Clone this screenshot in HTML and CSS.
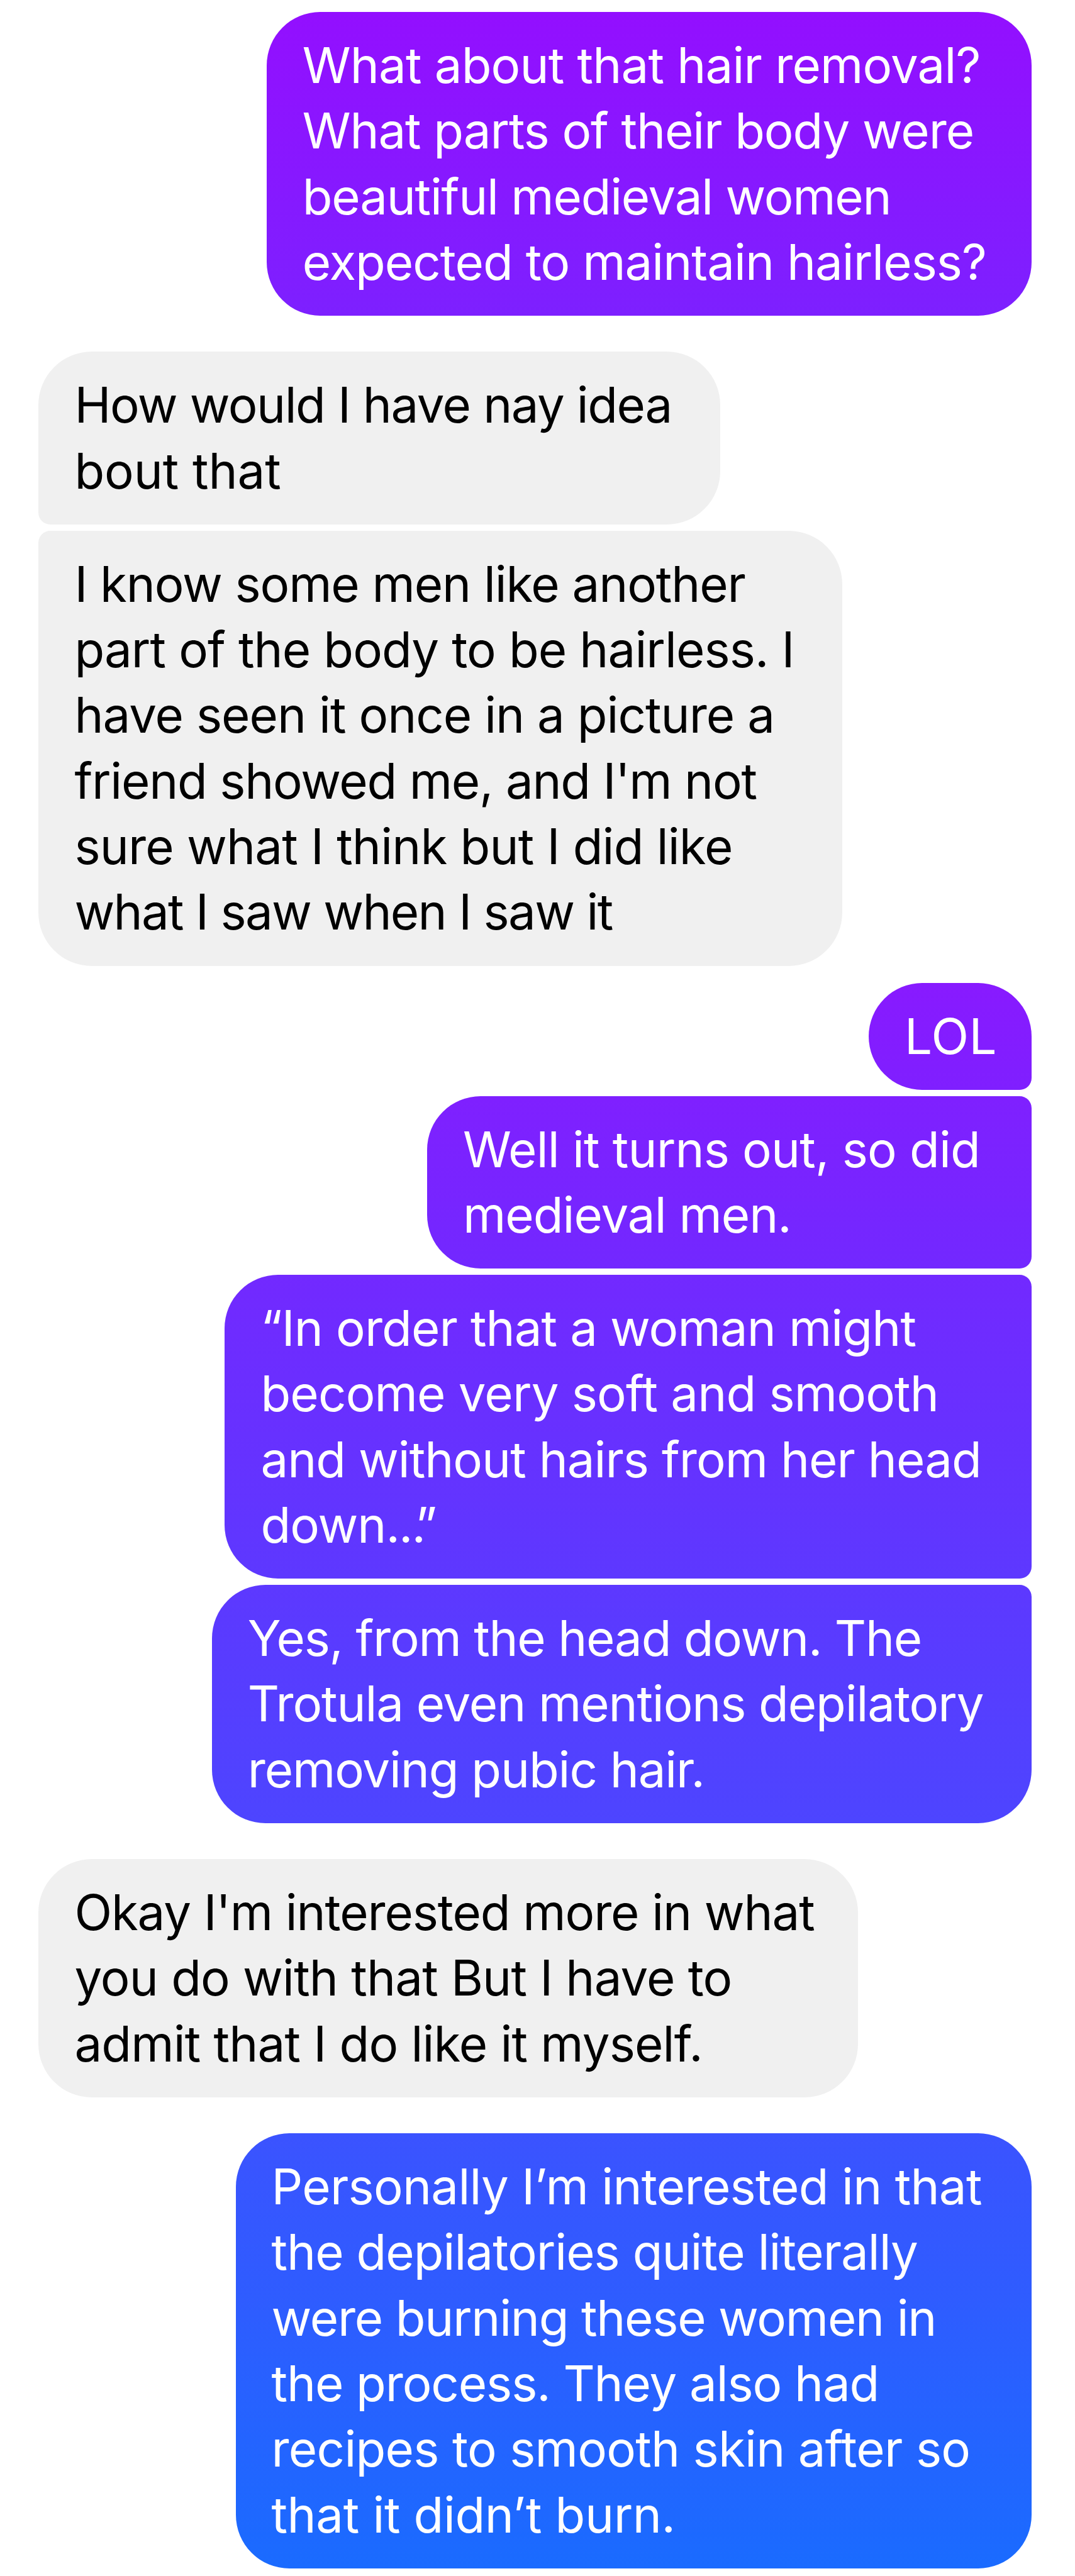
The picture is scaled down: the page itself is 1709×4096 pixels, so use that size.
FILE: index.html
```
<!DOCTYPE html>
<html lang="en">
<head>
    <meta charset="UTF-8">
    <title>Chat</title>
    <meta name="viewport" content="width=device-width, initial-scale=1.0">
    <link rel="stylesheet" href="styles.css">
</head>
<body>
    <div class="chat">
        <div class="group sent">
            <div class="bubble b1">
                <span class="s8">What about that hair removal?</span>
                <span class="s11">What parts of their body were</span>
                <span class="s12">beautiful medieval women</span>
                <span class="s10">expected to maintain hairless?</span>
            </div>
        </div>
        <div class="group received">
            <div class="bubble b2 first">
                <span class="s14">How would I have nay idea</span>
                <span class="s0">bout that</span>
            </div>
            <div class="bubble b3 last">
                <span class="s11">I know some men like another</span>
                <span class="s9">part of the body to be hairless. I</span>
                <span class="s10">have seen it once in a picture a</span>
                <span class="s12">friend showed me, and I'm not</span>
                <span class="s8">sure what I think but I did like</span>
                <span class="s17">what I saw when I saw it</span>
            </div>
        </div>
        <div class="group sent close">
            <div class="bubble b4 first">
                <span class="lol">LOL</span>
            </div>
            <div class="bubble b5 middle">
                <span class="s8">Well it turns out, so did</span>
                <span class="s10">medieval men.</span>
            </div>
            <div class="bubble b6 middle">
                <span class="s9">“In order that a woman might</span>
                <span class="s8">become very soft and smooth</span>
                <span class="s10">and without hairs from her head</span>
                <span class="s10">down<i class="dots">..</i><i class="dots end">.</i>”</span>
            </div>
            <div class="bubble b7 last">
                <span class="s12">Yes, from the head down. The</span>
                <span class="s11">Trotula even mentions depilatory</span>
                <span class="s11">removing pubic hair.</span>
            </div>
        </div>
        <div class="group received">
            <div class="bubble b8">
                <span class="s11">Okay I'm interested more in what</span>
                <span class="s8">you do with that But I have to</span>
                <span class="s8">admit that I do like it myself.</span>
            </div>
        </div>
        <div class="group sent">
            <div class="bubble b9">
                <span class="s7">Personally I’m interested in that</span>
                <span class="s10">the depilatories quite literally</span>
                <span class="s12">were burning these women in</span>
                <span class="s11">the process. They also had</span>
                <span class="s7">recipes to smooth skin after so</span>
                <span class="s4">that it didn’t burn.</span>
            </div>
        </div>
    </div>
</body>
</html>
```
FILE: styles.css
```
* {
    box-sizing: border-box;
}
body {
    margin: 0;
    background-color: white;
    font-family: Inter, "Liberation Sans", sans-serif;
}
.chat {
    display: flex;
    flex-direction: column;
    gap: 57px;
    padding: 19px 69px 0px 61.4px;
    height: 4096px;
    overflow: hidden;
}
.group {
    display: flex;
    flex-direction: column;
    gap: 9.7px;
}
.sent {
    align-items: flex-end;
}
.received {
    align-items: flex-start;
}
.close {
    margin-top: -29.9px;
}
.bubble {
    padding: 33px 0px 33px 57px;
    border-radius: 85px;
    font-size: 78px;
    line-height: 104.33px;
}
.bubble span {
    display: block;
    white-space: nowrap;
}
.sent .bubble {
    color: white;
}
.received .bubble {
    color: black;
    background-color: #f0f0f0;
}

/* corners that touch the next bubble of the same sender */
.sent .first, .sent .middle {
    border-bottom-right-radius: 19px;
}
.sent .last, .sent .middle {
    border-top-right-radius: 19px;
}
.received .first {
    border-bottom-left-radius: 19px;
}
.received .last {
    border-top-left-radius: 19px;
}

.sent .b1 {
    width: 1216.3px;
    background: linear-gradient(#930fff, #7d20ff);
}
.b2 {
    width: 1083.6px;
}
.b3 {
    width: 1278px;
}
.sent .b4 {
    width: 259px;
    background: linear-gradient(#881aff, #7f1fff);
}
.sent .b5 {
    width: 961px;
    background: linear-gradient(#7f20ff, #7228ff);
}
.sent .b6 {
    width: 1282.6px;
    background: linear-gradient(#7229ff, #5d38ff);
}
.sent .b7 {
    width: 1303.3px;
    background: linear-gradient(#5d38ff, #4d45ff);
}
.b8 {
    width: 1303px;
}
.sent .b9 {
    width: 1265.5px;
    background: linear-gradient(#3b53ff, #1a6bff);
}

/* letter spacing */
.s0 { letter-spacing: -0.1px; }
.s4 { letter-spacing: -0.4px; }
.s7 { letter-spacing: -0.74px; }
.s8 { letter-spacing: -0.84px; }
.s9 { letter-spacing: -0.92px; }
.s10 { letter-spacing: -1px; }
.s11 { letter-spacing: -1.12px; }
.s12 { letter-spacing: -1.25px; }
.s14 { letter-spacing: -1.45px; }
.s17 { letter-spacing: -1.72px; }
.lol { letter-spacing: 0.5px; }
.dots {
    font-style: normal;
    letter-spacing: -2px;
}
.end {
    letter-spacing: -16.3px;
}
```
